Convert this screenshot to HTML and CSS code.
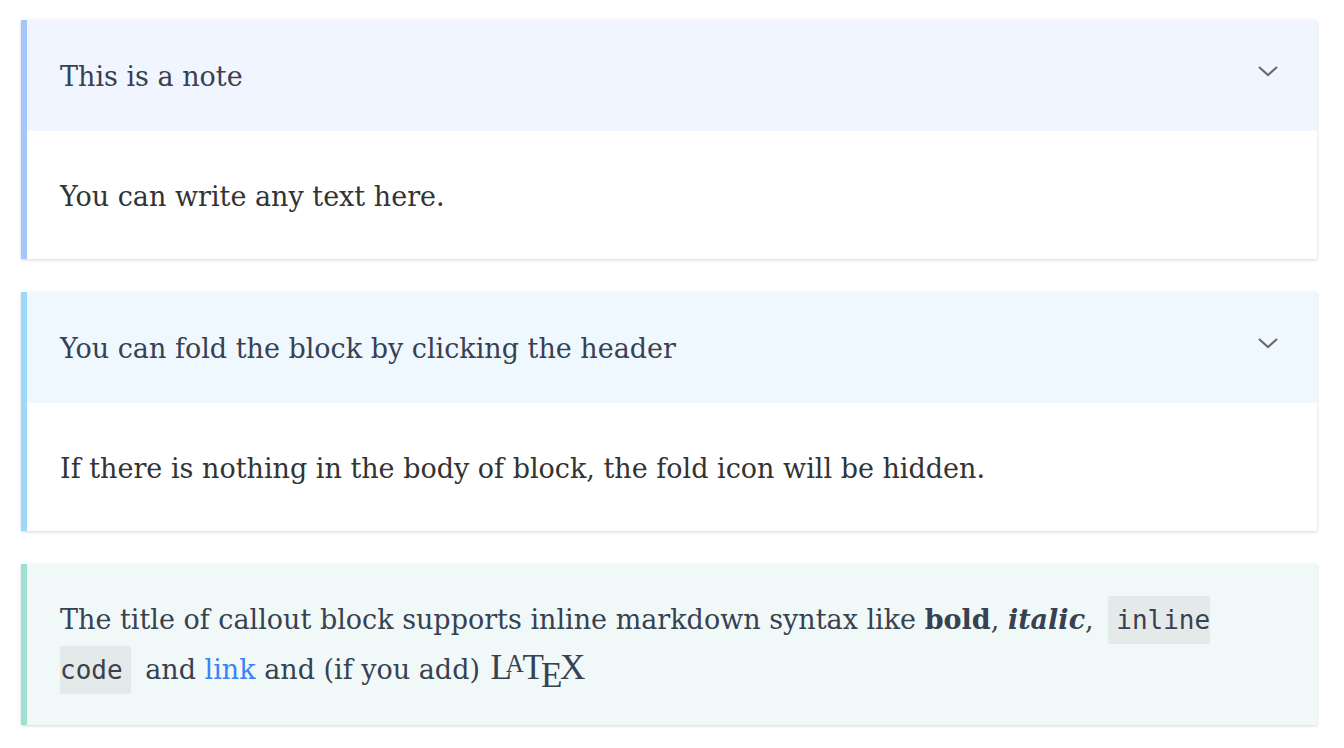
FILE: index.html
```html
<!DOCTYPE html>
<html>
<head>
<meta charset="utf-8">
<link rel="stylesheet" href="styles.css">
</head>
<body>
<div class="page">
  <div class="callout note">
    <div class="callout-header">
      <span class="title">This is a note</span>
      <svg class="chev" width="22" height="14" viewBox="0 0 22 14"><path d="M2 3 L11 11 L20 3" fill="none" stroke="#6b6b6b" stroke-width="2.2"/></svg>
    </div>
    <div class="callout-body">You can write any text here.</div>
  </div>
  <div class="callout info">
    <div class="callout-header">
      <span class="title">You can fold the block by clicking the header</span>
      <svg class="chev" width="22" height="14" viewBox="0 0 22 14"><path d="M2 3 L11 11 L20 3" fill="none" stroke="#6b6b6b" stroke-width="2.2"/></svg>
    </div>
    <div class="callout-body">If there is nothing in the body of block, the fold icon will be hidden.</div>
  </div>
  <div class="callout tip">
    <div class="callout-header">
      <span class="title">The title of callout block supports inline markdown syntax like <b>bold</b>, <b><i>italic</i></b>, <code class="code-start">inline </code><code class="code-end">code</code> and <a href="#">link</a> and (if you add) <span class="latex">L<span class="la">A</span>T<span class="le">E</span>X</span></span>
    </div>
  </div>
</div>
</body>
</html>
```
FILE: styles.css
```css
html, body { margin: 0; padding: 0; background: #fff; }
.page {
  padding: 20px 27px 20px 21px;
  display: flex;
  flex-direction: column;
  gap: 33px;
  font-family: "DejaVu Serif", "Liberation Serif", serif;
  font-size: 27px;
}
.callout {
  border-left: 6px solid #a4c6fd;
  box-shadow: 0 1px 3px rgba(0,0,0,0.16);
  background: #fff;
}
.callout.info { border-left-color: #9bd8fc; }
.callout.tip { border-left-color: #9ee0d2; }
.callout-header {
  display: flex;
  justify-content: space-between;
  align-items: flex-start;
  padding: 39px 38px 36px 33px;
  background: #f0f5ff;
  color: #374151;
  line-height: 36px;
}
.info .callout-header { background: #f0f8ff; }
.tip .callout-header { background: #f0f9f8; line-height: 50px; padding: 31px 60px 30px 33px; }
.chev { margin-top: 5px; }
.callout-body {
  padding: 48px 33px 44px 33px;
  line-height: 36px;
  color: #333;
}
b { font-weight: bold; }
code {
  font-family: "DejaVu Sans Mono", monospace;
  font-size: 26px;
  line-height: 1;
  background: #e4eaea;
  padding: 9px 0;
}
code.code-start { padding-left: 8px; margin-left: 6px; border-radius: 3px 0 0 3px; }
code.code-end { padding-right: 8px; margin-right: 6px; border-radius: 0 3px 3px 0; }
a { color: #3b82f6; text-decoration: none; }
.latex { font-family: "Liberation Serif", serif; font-size: 1.3em; white-space: nowrap; line-height: 0; margin-left: 2px; }
.latex .la { font-size: 0.7em; vertical-align: 0.28em; margin-left: -0.24em; margin-right: -0.06em; line-height: 0; }
.latex .le { vertical-align: -0.22em; margin-left: -0.08em; margin-right: -0.07em; line-height: 0; }
```
